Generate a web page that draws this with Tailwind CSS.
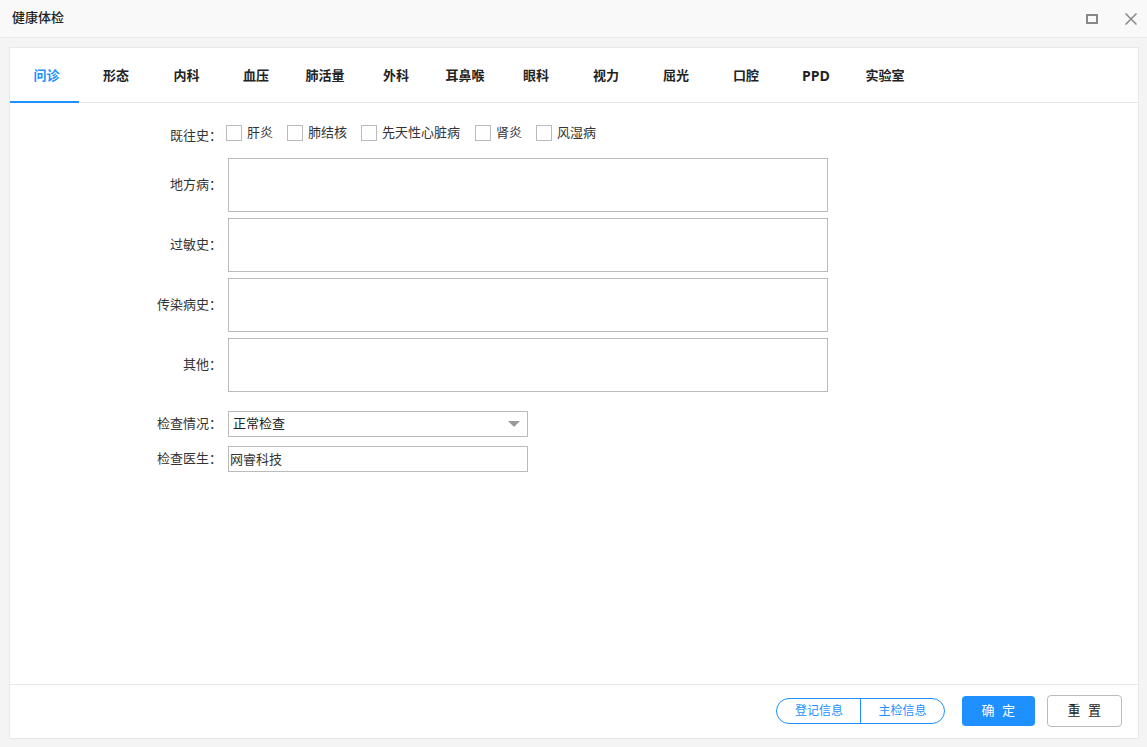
<!DOCTYPE html>
<html lang="zh-CN">
<head>
<meta charset="utf-8">
<title>健康体检</title>
<script src="https://cdn.jsdelivr.net/npm/@tailwindcss/browser@4"></script>
</head>
<body class="m-0 h-[747px] w-[1147px] overflow-hidden bg-[#f4f4f4] font-['Noto_Sans_CJK_SC',sans-serif] text-[13px] text-[#333]">
<div class="flex h-full flex-col">
  <header class="flex h-[38px] shrink-0 items-center justify-between border-b border-[#e8e8e8] bg-[#f9f9f9] pl-3 pr-[10px]">
    <span class="pb-[4px] text-[13px] font-medium leading-none text-[#222]">健康体检</span>
    <div class="flex items-center gap-[27px]">
      <span class="block h-[10px] w-[12px] border-2 border-[#888]"></span>
      <svg class="h-[12px] w-[12px]" viewBox="0 0 12 12" fill="none" stroke="#888" stroke-width="1.5"><path d="M0.5 0.5 11.5 11.5M11.5 0.5 0.5 11.5"/></svg>
    </div>
  </header>
  <main class="ml-[9px] mt-[9px] flex h-[692px] w-[1130px] flex-col border border-[#e8e8e8] bg-white">
    <nav class="flex h-[55px] shrink-0 border-b border-[#e8e8e8] font-bold text-[#222]">
      <a class="mb-[-1px] flex w-[69px] items-center justify-center border-b-[2px] border-[#1e90ff] pl-[4px] pt-[1px] text-[#1e90ff]">问诊</a>
      <a class="flex w-[70px] items-center justify-center pl-[4px]">形态</a>
      <a class="flex w-[71px] items-center justify-center pl-[4px]">内科</a>
      <a class="flex w-[70px] items-center justify-center pl-[2px]">血压</a>
      <a class="flex w-[70px] items-center justify-center">肺活量</a>
      <a class="flex w-[70px] items-center justify-center pl-[2px]">外科</a>
      <a class="flex w-[70px] items-center justify-center">耳鼻喉</a>
      <a class="flex w-[70px] items-center justify-center pl-[2px]">眼科</a>
      <a class="flex w-[70px] items-center justify-center pl-[2px]">视力</a>
      <a class="flex w-[70px] items-center justify-center pl-[2px]">屈光</a>
      <a class="flex w-[70px] items-center justify-center pl-[2px]">口腔</a>
      <a class="flex w-[70px] items-center justify-center pl-[2px] pt-[1px] font-['Open_Sans',sans-serif] text-[14px]">PPD</a>
      <a class="flex w-[70px] items-center justify-center">实验室</a>
    </nav>
    <form class="flex-1 pl-[133px] pt-[21px] text-[#333]">
      <div class="flex h-[18px] items-center">
        <label class="w-[79px] pt-[4px] text-right">既往史：</label>
        <div class="ml-[4px] flex items-center leading-none">
          <span class="h-4 w-4 border border-[#bbb]"></span><span class="mb-[4px] ml-[5px] mr-[14px]">肝炎</span>
          <span class="h-4 w-4 border border-[#bbb]"></span><span class="mb-[4px] ml-[5px] mr-[14px]">肺结核</span>
          <span class="h-4 w-4 border border-[#bbb]"></span><span class="mb-[4px] ml-[5px] mr-[15px]">先天性心脏病</span>
          <span class="h-4 w-4 border border-[#bbb]"></span><span class="mb-[4px] ml-[5px] mr-[14px]">肾炎</span>
          <span class="h-4 w-4 border border-[#bbb]"></span><span class="mb-[4px] ml-[5px]">风湿病</span>
        </div>
      </div>
      <div class="mt-[16px] flex flex-col gap-[6px]">
        <div class="flex items-center"><label class="w-[79px] pb-[2px] text-right">地方病：</label><div class="ml-[6px] h-[54px] w-[600px] border border-[#bbb]"></div></div>
        <div class="flex items-center"><label class="w-[79px] pb-[2px] text-right">过敏史：</label><div class="ml-[6px] h-[54px] w-[600px] border border-[#bbb]"></div></div>
        <div class="flex items-center"><label class="w-[79px] pb-[2px] text-right">传染病史：</label><div class="ml-[6px] h-[54px] w-[600px] border border-[#bbb]"></div></div>
        <div class="flex items-center"><label class="w-[79px] pb-[2px] text-right">其他：</label><div class="ml-[6px] h-[54px] w-[600px] border border-[#bbb]"></div></div>
      </div>
      <div class="mt-[19px] flex items-center">
        <label class="w-[79px] pb-[2px] text-right">检查情况：</label>
        <div class="ml-[6px] flex h-[26px] w-[300px] items-center justify-between border border-[#bbb] pl-1 pr-[7px] text-[#222]">
          <span class="pb-[2px]">正常检查</span>
          <span class="h-0 w-0 border-x-[6px] border-t-[6px] border-x-transparent border-t-[#999]"></span>
        </div>
      </div>
      <div class="mt-[9px] flex items-center">
        <label class="w-[79px] pb-[2px] text-right">检查医生：</label>
        <div class="ml-[6px] flex h-[26px] w-[300px] items-center border border-[#bbb] pl-[1px] text-[#333]">网睿科技</div>
      </div>
    </form>
    <footer class="flex h-[54px] shrink-0 items-center justify-end border-t border-[#e8e8e8] pb-[1px] pr-[16px]">
      <div class="flex h-[26px] w-[169px] rounded-full border border-[#1e90ff] text-[12px] text-[#1e90ff]">
        <span class="flex w-[84px] items-center justify-center border-r border-[#1e90ff] pb-[2px] pl-[1px]">登记信息</span>
        <span class="flex flex-1 items-center justify-center pb-[2px]">主检信息</span>
      </div>
      <button class="ml-[17px] h-[30px] w-[73px] rounded-[4px] bg-[#1e90ff] pb-[2px] text-[13px] tracking-[0.6px] text-white">确&nbsp;&nbsp;定</button>
      <button class="ml-[12px] h-[32px] w-[75px] rounded-[4px] border border-[#bbb] bg-white pb-[2px] text-[13px] tracking-[0.6px] text-[#222]">重&nbsp;&nbsp;置</button>
    </footer>
  </main>
</div>
</body>
</html>
